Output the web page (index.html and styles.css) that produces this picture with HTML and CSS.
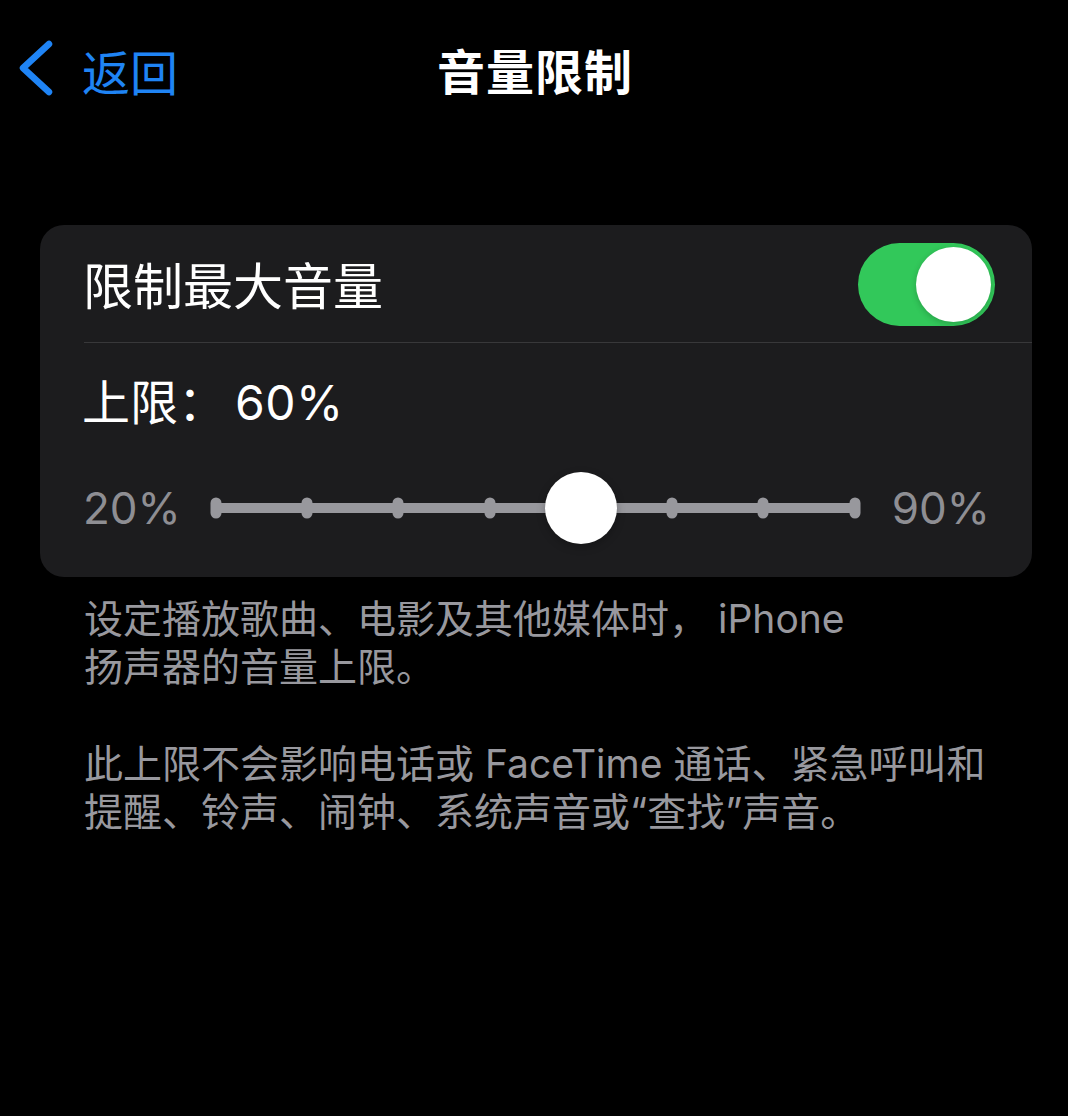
FILE: index.html
```html
<!DOCTYPE html>
<html lang="zh-CN">
<head>
<meta charset="utf-8">
<title>音量限制</title>
<link rel="stylesheet" href="styles.css">
</head>
<body>
<div class="screen">
  <header class="nav">
    <div class="back">
      <svg class="chev" width="36" height="60" viewBox="0 0 36 60" aria-hidden="true">
        <path d="M31 4 L5 28 L31 52" fill="none" stroke="#1f84f5" stroke-width="6.5" stroke-linecap="round" stroke-linejoin="round"/>
      </svg>
      <span class="back-text">返回</span>
    </div>
    <h1 class="title">音量限制</h1>
    <div class="spacer"></div>
  </header>

  <section class="card">
    <div class="row toggle-row">
      <span class="row-label">限制最大音量</span>
      <div class="switch on"><div class="switch-knob"></div></div>
    </div>
    <div class="sep"></div>
    <div class="limit">上限：<span class="limit-val">60%</span></div>
    <div class="slider-row">
      <span class="end-label">20%</span>
      <div class="track">
        <span class="tick" style="left:0%"></span>
        <span class="tick" style="left:14.2857%"></span>
        <span class="tick" style="left:28.5714%"></span>
        <span class="tick" style="left:42.8571%"></span>
        <span class="tick" style="left:71.4286%"></span>
        <span class="tick" style="left:85.7143%"></span>
        <span class="tick" style="left:100%"></span>
        <span class="knob" style="left:57.1429%"></span>
      </div>
      <span class="end-label">90%</span>
    </div>
  </section>

  <p class="note">设定播放歌曲、电影及其他媒体时，<span class="latin">iPhone</span><br>扬声器的音量上限。</p>
  <p class="note second">此上限不会影响电话或 FaceTime 通话、紧急呼叫和<br>提醒、铃声、闹钟、系统声音或“查找”声音。</p>
</div>
</body>
</html>
```

FILE: styles.css
```css
html, body {
  margin: 0;
  padding: 0;
  background: #000;
}
body {
  font-family: "Inter", "Noto Sans CJK SC", sans-serif;
  color: #fff;
  width: 1068px;
  height: 1116px;
  overflow: hidden;
}
.screen {
  display: flex;
  flex-direction: column;
}
.nav {
  height: 144px;
  display: grid;
  grid-template-columns: 1fr auto 1fr;
  align-items: center;
}
.back {
  display: flex;
  align-items: center;
  padding-left: 18px;
  gap: 28px;
  color: #1f84f5;
  margin-top: -4px;
}
.chev {
  display: block;
}
.back-text {
  font-size: 48px;
  line-height: 60px;
  font-family: "Noto Sans CJK SC", sans-serif;
}
.title {
  margin: -6px 0 0;
  font-size: 48px;
  line-height: 60px;
  font-weight: 700;
  font-family: "Noto Sans CJK SC", sans-serif;
  letter-spacing: 1px;
  padding-left: 2px;
}
.card {
  margin: 81px 36px 0 40px;
  background: #1c1c1e;
  border-radius: 24px;
  display: flex;
  flex-direction: column;
}
.toggle-row {
  height: 117px;
  display: flex;
  align-items: center;
  justify-content: space-between;
  padding: 0 37px 0 43px;
  box-sizing: border-box;
}
.row-label {
  font-family: "Noto Sans CJK SC", sans-serif;
  font-size: 50px;
  line-height: 60px;
  margin-top: -2px;
}
.switch {
  width: 137px;
  height: 83px;
  border-radius: 42px;
  background: #32c85a;
  position: relative;
  margin-top: 1px;
}
.switch-knob {
  position: absolute;
  right: 4px;
  top: 4px;
  width: 75px;
  height: 75px;
  border-radius: 50%;
  background: #fff;
  box-shadow: 0 2px 6px rgba(0,0,0,0.2);
}
.sep {
  height: 1px;
  background: #38383a;
  margin-left: 44px;
}
.limit {
  padding: 30px 0 0 42px;
  font-size: 48px;
  line-height: 60px;
}
.limit-val {
  margin-left: 9px;
  letter-spacing: 0.5px;
}
.slider-row {
  display: flex;
  align-items: center;
  height: 72px;
  margin: 39px 0 33px;
  padding: 0 42px 0 43px;
  gap: 33px;
}
.end-label {
  font-size: 44px;
  color: #8e8e93;
  line-height: 60px;
}
.track {
  flex: 1;
  height: 10px;
  background: #98989d;
  border-radius: 5px;
  position: relative;
  margin: 0 4px 0 2px;
}
.tick {
  position: absolute;
  top: 50%;
  width: 11px;
  height: 21px;
  border-radius: 6px;
  background: #98989d;
  transform: translate(-50%, -50%);
}
.knob {
  position: absolute;
  top: 50%;
  width: 72px;
  height: 72px;
  border-radius: 50%;
  background: #fff;
  transform: translate(-50%, -50%);
  box-shadow: 0 3px 8px rgba(0,0,0,0.25);
}
.note {
  margin: 18px 40px 0 84px;
  font-size: 39px;
  line-height: 48px;
  color: #98989e;
  white-space: nowrap;
}
.latin {
  margin-left: 10px;
}
.note.second {
  margin-top: 49px;
}
```
